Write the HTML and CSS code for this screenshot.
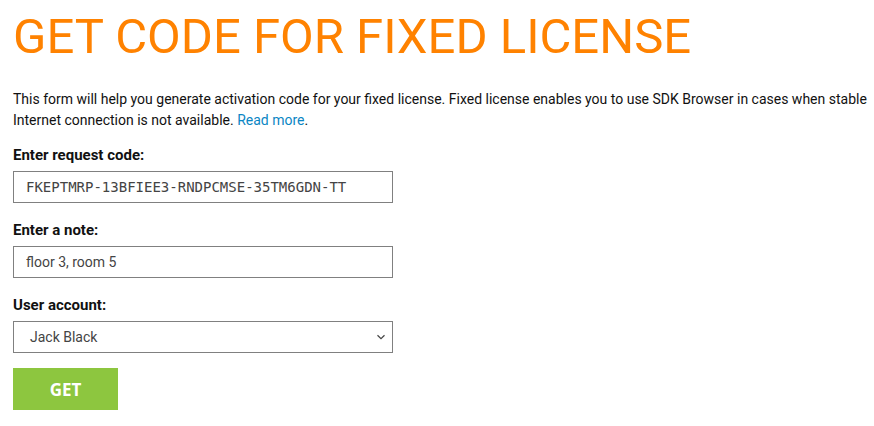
FILE: index.html
```html
<!DOCTYPE html>
<html>
<head>
<meta charset="utf-8">
<link rel="stylesheet" href="styles.css">
</head>
<body>
<div class="page">
  <h1 class="title">GET CODE FOR FIXED LICENSE</h1>
  <p class="intro">This form will help you generate activation code for your fixed license. Fixed license enables you to use SDK Browser in cases when stable Internet connection is not available. <a href="#" class="link">Read more</a>.</p>
  <form class="form">
    <div class="field">
      <label class="label">Enter request code:</label>
      <input class="input mono" type="text" value="FKEPTMRP-13BFIEE3-RNDPCMSE-35TM6GDN-TT">
    </div>
    <div class="field">
      <label class="label">Enter a note:</label>
      <input class="input" type="text" value="floor 3, room 5">
    </div>
    <div class="field field-last">
      <label class="label">User account:</label>
      <div class="select">
        <span class="select-text">Jack Black</span>
        <svg class="chev" width="10" height="6" viewBox="0 0 10 6"><path d="M1.5 1.2 L5 4.6 L8.5 1.2" fill="none" stroke="#444" stroke-width="1.2"/></svg>
      </div>
    </div>
    <button class="btn" type="button">GET</button>
  </form>
</div>
</body>
</html>
```
FILE: styles.css
```css
html, body { margin: 0; padding: 0; background: #fff; }
body { font-family: Roboto, "Noto Sans", sans-serif; color: #111; }
.page { padding: 0 13px; }
.title {
  margin: 0;
  padding-top: 9px;
  font-family: Roboto, sans-serif;
  font-weight: 400;
  font-size: 49px;
  line-height: 56px;
  color: #ff8200;
  letter-spacing: 0;
}
.intro {
  margin: 24px 0 0;
  font-size: 14px;
  line-height: 21px;
  color: #111;
  width: 860px;
}
.link { color: #0a86c4; text-decoration: none; }
.form { margin-top: 14px; }
.field { margin-bottom: 17px; }
.field-last { margin-bottom: 15px; }
.label { display: block; font-weight: 700; font-size: 15px; line-height: 20px; margin-bottom: 6px; }
.input, .select {
  box-sizing: border-box;
  width: 380px;
  height: 32px;
  border: 1px solid #808080;
  padding: 0 12px;
  font-family: Roboto, sans-serif;
  font-size: 14px;
  color: #444;
  background: #fff;
  outline: none;
  display: block;
}
.mono { font-family: "DejaVu Sans Mono", monospace; font-size: 14px; letter-spacing: 0; }
.select { display: flex; align-items: center; justify-content: space-between; padding: 0 6px 0 16px; }
.btn {
  display: block;
  margin-top: 0;
  width: 105px;
  height: 42px;
  border: none;
  background: #8dc63f;
  color: #fff;
  font-family: "Open Sans", sans-serif;
  font-weight: 700;
  font-size: 17px;
  cursor: pointer;
}
```
